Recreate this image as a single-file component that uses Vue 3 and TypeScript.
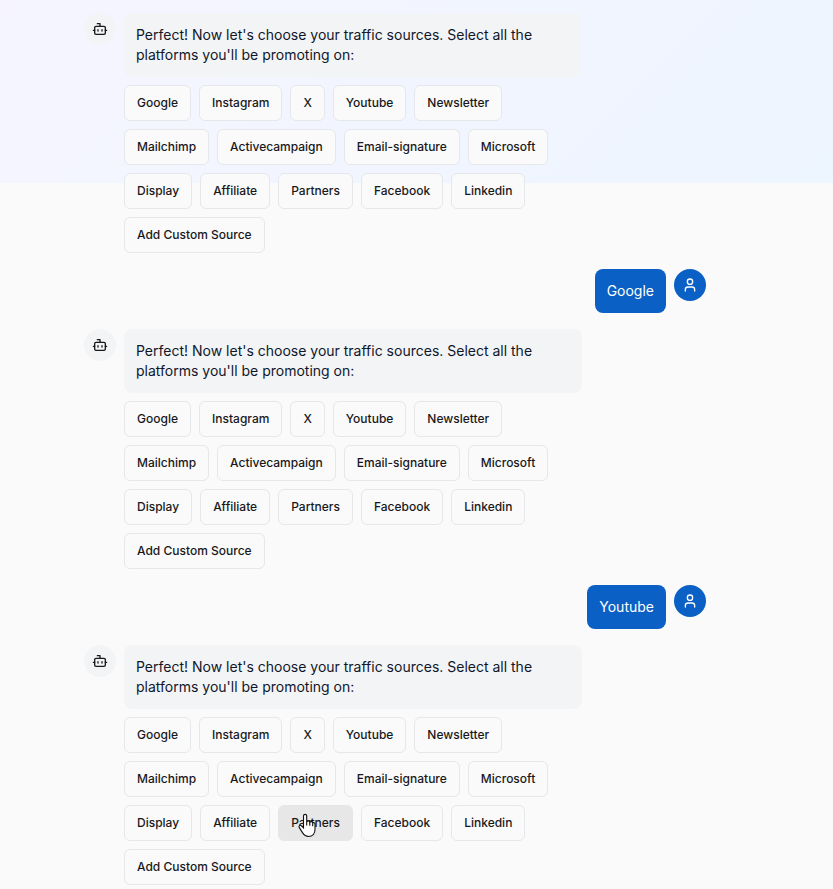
<script setup lang="ts">
interface Turn {
  reply?: string
  active?: string
}

const sources: string[] = [
  'Google', 'Instagram', 'X', 'Youtube', 'Newsletter',
  'Mailchimp', 'Activecampaign', 'Email-signature', 'Microsoft',
  'Display', 'Affiliate', 'Partners', 'Facebook', 'Linkedin',
  'Add Custom Source',
]

const turns: Turn[] = [
  { reply: 'Google' },
  { reply: 'Youtube' },
  { active: 'Partners' },
]
</script>

<template>
  <main class="page">
    <div class="chat">
      <template v-for="(turn, i) in turns" :key="i">
        <section class="message">
          <div class="avatar bot">
            <svg viewBox="0 0 24 24" class="icon">
              <path d="M12 8V4H8" />
              <rect width="16" height="12" x="4" y="8" rx="2" />
              <path d="M2 14h2M20 14h2M15 13v2M9 13v2" />
            </svg>
          </div>
          <div class="content">
            <p class="bubble">Perfect! Now let's choose your traffic sources. Select all the platforms you'll be promoting on:</p>
            <div class="options">
              <button
                v-for="source in sources"
                :key="source"
                type="button"
                class="option"
                :class="{ active: source === turn.active }"
              >
                {{ source }}
                <svg v-if="source === turn.active" class="pointer" viewBox="0 0 18 25">
                  <path d="M5.5 15V3a1.6 1.6 0 0 1 3.2 0v6c.3-1.3 2.8-1.3 3.1.3.5-1.1 2.7-.9 2.9.7.6-.7 2.3-.3 2.3 1.2v5.4c0 4-2.5 6.9-6.3 6.9-3.2 0-4.8-1.6-6.4-4.1L1.2 14.4c-.8-1.4.8-2.8 2.1-1.7z" />
                  <path d="M8.7 8.5v4M11.8 9.3v3.5M14.7 10.2v3" />
                </svg>
              </button>
            </div>
          </div>
        </section>
        <section v-if="turn.reply" class="message user">
          <p class="bubble reply">{{ turn.reply }}</p>
          <div class="avatar person">
            <svg viewBox="0 0 24 24" class="icon">
              <path d="M19 21v-2a4 4 0 0 0-4-4H9a4 4 0 0 0-4 4v2" />
              <circle cx="12" cy="7" r="4" />
            </svg>
          </div>
        </section>
      </template>
    </div>
  </main>
</template>

<style>
body {
  background: #fafafa;
}
</style>

<style scoped>
.page {
  box-sizing: border-box;
  height: 889px;
  overflow: hidden;
  padding: 13px 127px 0 84px;
  background: linear-gradient(135deg, #f6f5ff 0%, #f1f5ff 55%, #edf5ff 100%) 0 0 / 100% 183px no-repeat #fafafa;
  font-family: Inter, sans-serif;
  color: #0f172a;
}
.chat {
  display: flex;
  flex-direction: column;
  gap: 16px;
}
.message {
  display: flex;
  align-items: flex-start;
  gap: 8px;
}
.user {
  justify-content: flex-end;
}
.avatar {
  display: flex;
  flex: none;
  align-items: center;
  justify-content: center;
  width: 32px;
  height: 32px;
  border-radius: 50%;
}
.bot {
  background: #f3f4f6;
  color: #18181b;
}
.person {
  background: #0a60c4;
  color: #fff;
}
.icon {
  width: 16px;
  height: 16px;
  fill: none;
  stroke: currentColor;
  stroke-width: 2;
  stroke-linecap: round;
  stroke-linejoin: round;
}
.content {
  display: flex;
  flex-direction: column;
  gap: 8px;
  width: 458px;
}
.bubble {
  margin: 0;
  padding: 12px;
  border-radius: 8px;
  background: #f3f4f6;
  font-size: 14px;
  line-height: 20px;
}
.reply {
  background: #0a60c4;
  color: #fff;
}
.options {
  display: flex;
  flex-wrap: wrap;
  gap: 8px;
}
.option {
  position: relative;
  box-sizing: border-box;
  height: 36px;
  padding: 0 12px;
  border: 1px solid #e5e7eb;
  border-radius: 6px;
  background: #fafafa;
  color: #18181b;
  font: 500 12px/16px Inter, sans-serif;
  white-space: nowrap;
}
.active {
  border-color: #e7e7e7;
  background: #e7e7e7;
}
.pointer {
  position: absolute;
  top: 7px;
  left: 19px;
  width: 18px;
  height: 25px;
  overflow: visible;
  fill: #fff;
  stroke: #111;
  stroke-width: 1.1;
}
</style>
